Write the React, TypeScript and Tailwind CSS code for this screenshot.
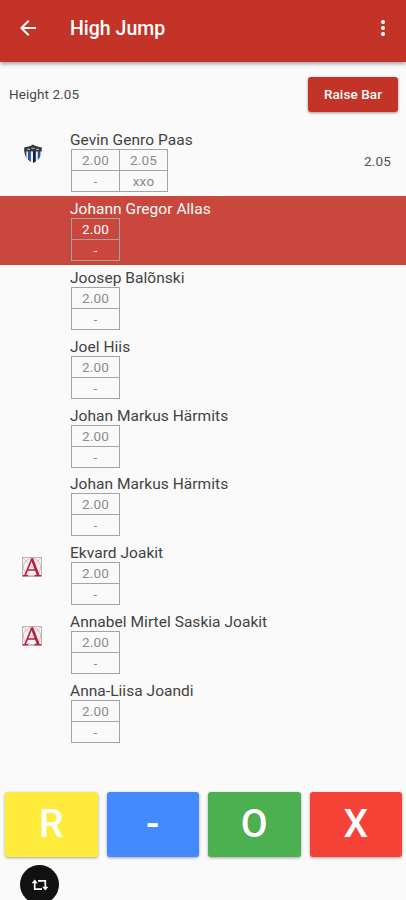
interface Mark {
  height: string;
  result: string;
}

interface Athlete {
  id: number;
  name: string;
  club?: "shield" | "letter";
  marks: Mark[];
  best?: string;
}

const athletes: Athlete[] = [
  {
    id: 1,
    name: "Gevin Genro Paas",
    club: "shield",
    marks: [
      { height: "2.00", result: "-" },
      { height: "2.05", result: "xxo" },
    ],
    best: "2.05",
  },
  { id: 2, name: "Johann Gregor Allas", marks: [{ height: "2.00", result: "-" }] },
  { id: 3, name: "Joosep Balõnski", marks: [{ height: "2.00", result: "-" }] },
  { id: 4, name: "Joel Hiis", marks: [{ height: "2.00", result: "-" }] },
  { id: 5, name: "Johan Markus Härmits", marks: [{ height: "2.00", result: "-" }] },
  { id: 6, name: "Johan Markus Härmits", marks: [{ height: "2.00", result: "-" }] },
  { id: 7, name: "Ekvard Joakit", club: "letter", marks: [{ height: "2.00", result: "-" }] },
  { id: 8, name: "Annabel Mirtel Saskia Joakit", club: "letter", marks: [{ height: "2.00", result: "-" }] },
  { id: 9, name: "Anna-Liisa Joandi", marks: [{ height: "2.00", result: "-" }] },
];

const attempts = [
  { label: "R", color: "bg-[#ffeb3b]" },
  { label: "-", color: "bg-[#448aff]" },
  { label: "O", color: "bg-[#4caf50]" },
  { label: "X", color: "bg-[#f44336]" },
];

function ShieldLogo() {
  return (
    <svg className="ml-px" width="20" height="20" viewBox="0 0 20 20">
      <defs>
        <clipPath id="shield">
          <path d="M10 .5 12.5 2 18.8 3.4C18.8 7 19.2 15.5 10 19 .8 15.5 1.2 7 1.2 3.4L7.5 2Z" />
        </clipPath>
      </defs>
      <g clipPath="url(#shield)">
        <rect width="20" height="20" fill="#e8ecf4" />
        <rect y="7" width="3.4" height="13" fill="#3c4048" />
        <rect x="5" y="7" width="2.8" height="13" fill="#24549c" />
        <rect x="10" y="7" width="2.8" height="13" fill="#16203c" />
        <rect x="14.8" y="7" width="2.6" height="13" fill="#24549c" />
        <rect width="20" height="7.4" fill="#34363c" />
        <path d="M4 5.4h3M8.4 4.4h3.2M13 5.4h3" stroke="#a5a7ad" strokeWidth="1.4" />
      </g>
    </svg>
  );
}

function LetterLogo() {
  return (
    <svg width="20" height="20" viewBox="0 0 20 20" fill="none">
      <rect x=".5" y=".5" width="19" height="19" fill="#f7f1f1" stroke="#b3a0a3" strokeWidth=".8" />
      <circle cx="10" cy="10" r="8.6" stroke="#c9a3a9" strokeWidth=".7" />
      <path d="M1 1l18 18M19 1 1 19" stroke="#d0b2b6" strokeWidth=".6" />
      <path d="M3.2 18 9.8 2M5.4 13h9" stroke="#b8203c" strokeWidth="1.7" />
      <path d="M9.8 1.5 16.2 18" stroke="#b8203c" strokeWidth="2.6" />
      <path d="M.8 18.6h5.4M12.5 18.6h6.7" stroke="#b8203c" strokeWidth="1.4" />
    </svg>
  );
}

function AthleteRow({ athlete, active }: { athlete: Athlete; active: boolean }) {
  return (
    <li className={`flex h-[68.9px] ${active ? "bg-[#c9473c] text-white" : "text-[#424242]"}`}>
      <div className="flex w-[71px] shrink-0 items-center pb-[15px] pl-[22px]">
        {athlete.club === "shield" && <ShieldLogo />}
        {athlete.club === "letter" && <LetterLogo />}
      </div>
      <div className="flex-1 pt-1">
        <h2 className="-ml-px h-[18px] text-[15.5px] leading-[18px] tracking-[0.04px] whitespace-nowrap">{athlete.name}</h2>
        <div className="flex">
          {athlete.marks.map((mark) => (
            <div
              key={mark.height}
              className={`-mr-px w-[49px] border border-[#a3a3a3] text-center text-[13.5px] tracking-[0.2px] ${
                active ? "" : "text-[#8c8c8c]"
              }`}
            >
              <div className="h-[21px] border-b border-[#a3a3a3] leading-5">{mark.height}</div>
              <div className="h-5 leading-5">{mark.result}</div>
            </div>
          ))}
        </div>
      </div>
      {athlete.best && (
        <span className="pt-6 pr-[15px] text-[13.5px] leading-5 tracking-[0.2px] text-[#555555]">{athlete.best}</span>
      )}
    </li>
  );
}

export default function App() {
  return (
    <main className="flex h-[900px] w-full flex-col overflow-hidden bg-[#fafafa] font-[Roboto,sans-serif]">
      {/* App bar */}
      <header className="flex h-[62px] shrink-0 items-center bg-[#c43327] pr-[11px] pb-[6px] pl-[16px] text-white shadow-[0_2px_4px_rgba(0,0,0,0.35)]">
        <button aria-label="Back">
          <svg width="24" height="24" viewBox="0 0 24 24" fill="currentColor">
            <path d="M20 11H7.83l5.59-5.59L12 4l-8 8 8 8 1.41-1.41L7.83 13H20v-2z" />
          </svg>
        </button>
        <h1 className="flex-1 pt-px pl-[30px] text-[19.5px] font-medium">High Jump</h1>
        <button aria-label="More">
          <svg width="24" height="24" viewBox="0 0 24 24" fill="currentColor">
            <circle cx="12" cy="6" r="2.1" />
            <circle cx="12" cy="12" r="2.1" />
            <circle cx="12" cy="18" r="2.1" />
          </svg>
        </button>
      </header>

      {/* Current height */}
      <section className="flex h-[65px] shrink-0 items-center justify-between pr-2 pl-[9px]">
        <span className="text-[13.5px] tracking-[0.08px] text-[#484848]">Height 2.05</span>
        <button className="h-[35px] w-[90px] rounded-[3px] bg-[#c43327] text-[13.5px] font-medium tracking-[0.1px] text-white shadow-[0_1px_3px_rgba(0,0,0,0.4)]">
          Raise Bar
        </button>
      </section>

      <ul className="shrink-0">
        {athletes.map((athlete) => (
          <AthleteRow key={athlete.id} athlete={athlete} active={athlete.id === 2} />
        ))}
      </ul>

      {/* Attempt buttons */}
      <section className="mt-[45px] grid shrink-0 grid-cols-4 gap-[9px] pr-1 pl-[5px]">
        {attempts.map(({ label, color }) => (
          <button
            key={label}
            className={`h-[65px] rounded-[3px] text-[39px] font-medium text-white shadow-[0_1px_3px_rgba(0,0,0,0.35)] ${color}`}
          >
            {label}
          </button>
        ))}
      </section>

      <button
        aria-label="Repeat"
        className="mt-2 ml-5 flex size-[39px] shrink-0 items-center justify-center rounded-full bg-[#111111] text-white"
      >
        <svg width="18" height="14" viewBox="0 0 18 14" fill="none" stroke="currentColor" strokeWidth="1.7">
          <path d="M3.7 4v7.2H11M7 2.8h7.3V10" />
          <path d="M.6 5.2 3.7 1.6l3.1 3.6zM11.2 8.8l3.1 3.6 3.1-3.6z" fill="currentColor" stroke="none" />
        </svg>
      </button>
    </main>
  );
}
